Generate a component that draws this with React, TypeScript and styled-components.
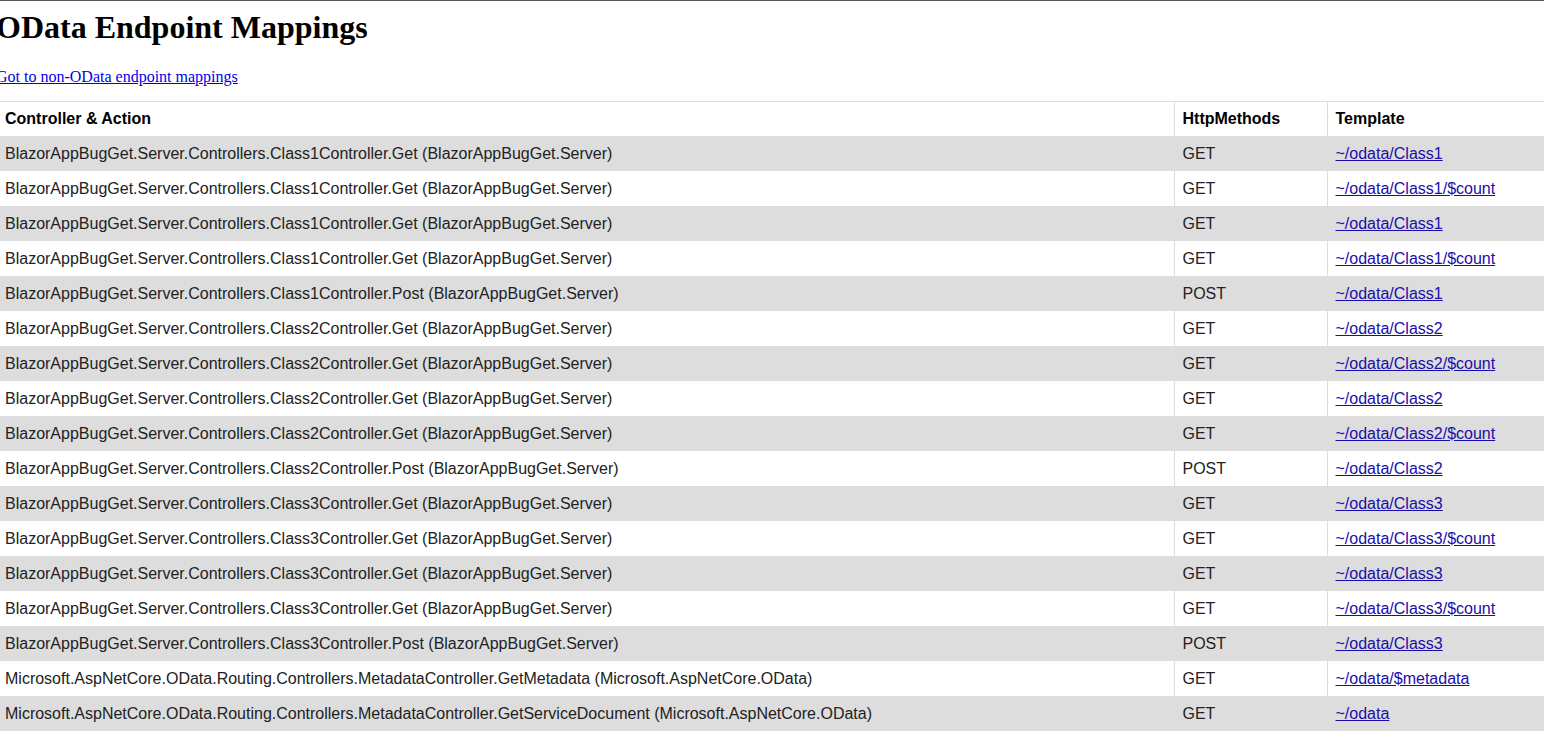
import React from "react";
import styled, { createGlobalStyle } from "styled-components";

const GlobalStyle = createGlobalStyle`
  html, body { margin: 0; padding: 0; background: #fff; }
  body { font-family: "Liberation Serif", "Times New Roman", serif; color: #000; }
`;

const Page = styled.div`
  border-top: 1px solid #555;
`;

const Title = styled.h1`
  font-family: "Liberation Serif", "Times New Roman", serif;
  font-size: 32px;
  font-weight: bold;
  margin: 8px 0 22px -4px;
  line-height: 37px;
`;

const NavLine = styled.p`
  margin: 0 0 15px -4px;
  font-size: 16px;
  line-height: 18px;
`;

const NavLink = styled.a`
  color: #0000ee;
  text-decoration: underline;
`;

const Table = styled.table`
  width: 100%;
  border-collapse: collapse;
  table-layout: fixed;
  font-family: "Liberation Sans", Arial, sans-serif;
  font-size: 16px;
  border-top: 1px solid #ddd;
`;

const Row = styled.tr<{ $shaded: boolean }>`
  background: ${(p) => (p.$shaded ? "#dddddd" : "#ffffff")};
`;

const HeadCell = styled.th`
  height: 34px;
  padding: 0 8px;
  text-align: left;
  font-weight: bold;
  color: #000;
  border-left: 1px solid #ddd;
  vertical-align: middle;
  &:first-child { border-left: none; padding-left: 5px; }
`;

const Cell = styled.td`
  height: 35px;
  padding: 0 8px;
  color: #222;
  border-left: 1px solid #ddd;
  vertical-align: middle;
  white-space: nowrap;
  &:first-child { border-left: none; padding-left: 5px; }
`;

const TemplateLink = styled.a`
  color: #1a0dab;
  text-decoration: underline;
`;

type Mapping = { action: string; method: string; template: string };

const rows: Mapping[] = [
  ["BlazorAppBugGet.Server.Controllers.Class1Controller.Get (BlazorAppBugGet.Server)", "GET", "~/odata/Class1"],
  ["BlazorAppBugGet.Server.Controllers.Class1Controller.Get (BlazorAppBugGet.Server)", "GET", "~/odata/Class1/$count"],
  ["BlazorAppBugGet.Server.Controllers.Class1Controller.Get (BlazorAppBugGet.Server)", "GET", "~/odata/Class1"],
  ["BlazorAppBugGet.Server.Controllers.Class1Controller.Get (BlazorAppBugGet.Server)", "GET", "~/odata/Class1/$count"],
  ["BlazorAppBugGet.Server.Controllers.Class1Controller.Post (BlazorAppBugGet.Server)", "POST", "~/odata/Class1"],
  ["BlazorAppBugGet.Server.Controllers.Class2Controller.Get (BlazorAppBugGet.Server)", "GET", "~/odata/Class2"],
  ["BlazorAppBugGet.Server.Controllers.Class2Controller.Get (BlazorAppBugGet.Server)", "GET", "~/odata/Class2/$count"],
  ["BlazorAppBugGet.Server.Controllers.Class2Controller.Get (BlazorAppBugGet.Server)", "GET", "~/odata/Class2"],
  ["BlazorAppBugGet.Server.Controllers.Class2Controller.Get (BlazorAppBugGet.Server)", "GET", "~/odata/Class2/$count"],
  ["BlazorAppBugGet.Server.Controllers.Class2Controller.Post (BlazorAppBugGet.Server)", "POST", "~/odata/Class2"],
  ["BlazorAppBugGet.Server.Controllers.Class3Controller.Get (BlazorAppBugGet.Server)", "GET", "~/odata/Class3"],
  ["BlazorAppBugGet.Server.Controllers.Class3Controller.Get (BlazorAppBugGet.Server)", "GET", "~/odata/Class3/$count"],
  ["BlazorAppBugGet.Server.Controllers.Class3Controller.Get (BlazorAppBugGet.Server)", "GET", "~/odata/Class3"],
  ["BlazorAppBugGet.Server.Controllers.Class3Controller.Get (BlazorAppBugGet.Server)", "GET", "~/odata/Class3/$count"],
  ["BlazorAppBugGet.Server.Controllers.Class3Controller.Post (BlazorAppBugGet.Server)", "POST", "~/odata/Class3"],
  ["Microsoft.AspNetCore.OData.Routing.Controllers.MetadataController.GetMetadata (Microsoft.AspNetCore.OData)", "GET", "~/odata/$metadata"],
  ["Microsoft.AspNetCore.OData.Routing.Controllers.MetadataController.GetServiceDocument (Microsoft.AspNetCore.OData)", "GET", "~/odata"],
].map(([action, method, template]) => ({ action, method, template }));

export default function App() {
  return (
    <>
      <GlobalStyle />
      <Page>
        <Title>OData Endpoint Mappings</Title>
        <NavLine>
          <NavLink href="#">Got to non-OData endpoint mappings</NavLink>
        </NavLine>
        <Table>
          <colgroup>
            <col style={{ width: 1174 }} />
            <col style={{ width: 153 }} />
            <col />
          </colgroup>
          <thead>
            <Row $shaded={false}>
              <HeadCell>Controller &amp; Action</HeadCell>
              <HeadCell>HttpMethods</HeadCell>
              <HeadCell>Template</HeadCell>
            </Row>
          </thead>
          <tbody>
            {rows.map((r, i) => (
              <Row key={i} $shaded={i % 2 === 0}>
                <Cell>{r.action}</Cell>
                <Cell>{r.method}</Cell>
                <Cell>
                  <TemplateLink href="#">{r.template}</TemplateLink>
                </Cell>
              </Row>
            ))}
          </tbody>
        </Table>
      </Page>
    </>
  );
}
